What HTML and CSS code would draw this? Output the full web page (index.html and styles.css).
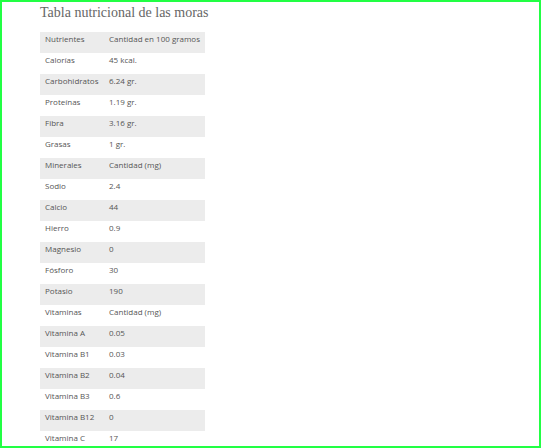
FILE: index.html
```html
<!DOCTYPE html>
<html lang="es">
<head>
<meta charset="utf-8">
<link rel="stylesheet" href="styles.css">
</head>
<body>
<div class="frame">
  <h2 class="title">Tabla nutricional de las moras</h2>
  <table class="nutri">
    <tbody>
      <tr><td>Nutrientes</td><td>Cantidad en 100 gramos</td></tr>
      <tr><td>Calorías</td><td>45 kcal.</td></tr>
      <tr><td>Carbohidratos</td><td>6.24 gr.</td></tr>
      <tr><td>Proteínas</td><td>1.19 gr.</td></tr>
      <tr><td>Fibra</td><td>3.16 gr.</td></tr>
      <tr><td>Grasas</td><td>1 gr.</td></tr>
      <tr><td>Minerales</td><td>Cantidad (mg)</td></tr>
      <tr><td>Sodio</td><td>2.4</td></tr>
      <tr><td>Calcio</td><td>44</td></tr>
      <tr><td>Hierro</td><td>0.9</td></tr>
      <tr><td>Magnesio</td><td>0</td></tr>
      <tr><td>Fósforo</td><td>30</td></tr>
      <tr><td>Potasio</td><td>190</td></tr>
      <tr><td>Vitaminas</td><td>Cantidad (mg)</td></tr>
      <tr><td>Vitamina A</td><td>0.05</td></tr>
      <tr><td>Vitamina B1</td><td>0.03</td></tr>
      <tr><td>Vitamina B2</td><td>0.04</td></tr>
      <tr><td>Vitamina B3</td><td>0.6</td></tr>
      <tr><td>Vitamina B12</td><td>0</td></tr>
      <tr><td>Vitamina C</td><td>17</td></tr>
    </tbody>
  </table>
</div>
</body>
</html>
```

FILE: styles.css
```css
html, body {
  margin: 0;
  padding: 0;
  background: #fff;
}
.frame {
  box-sizing: border-box;
  width: 541px;
  height: 448px;
  border: 2px solid #22ff44;
  padding: 0 0 0 38px;
  overflow: hidden;
}
.title {
  margin: 0;
  padding-top: 2px;
  height: 28px;
  font-family: "Liberation Serif", serif;
  font-weight: normal;
  font-size: 14px;
  line-height: 18px;
  color: #666;
}
.nutri {
  border-collapse: collapse;
  width: 165px;
  font-family: "Open Sans", sans-serif;
  font-size: 8px;
  color: #555;
}
.nutri tr {
  height: 21px;
}
.nutri tr:nth-child(odd) {
  background: #ececec;
}
.nutri td {
  padding: 0 5px 7px 5px;
  line-height: 10px;
  vertical-align: middle;
  white-space: nowrap;
}
.nutri td:first-child {
  width: 58px;
}
```
